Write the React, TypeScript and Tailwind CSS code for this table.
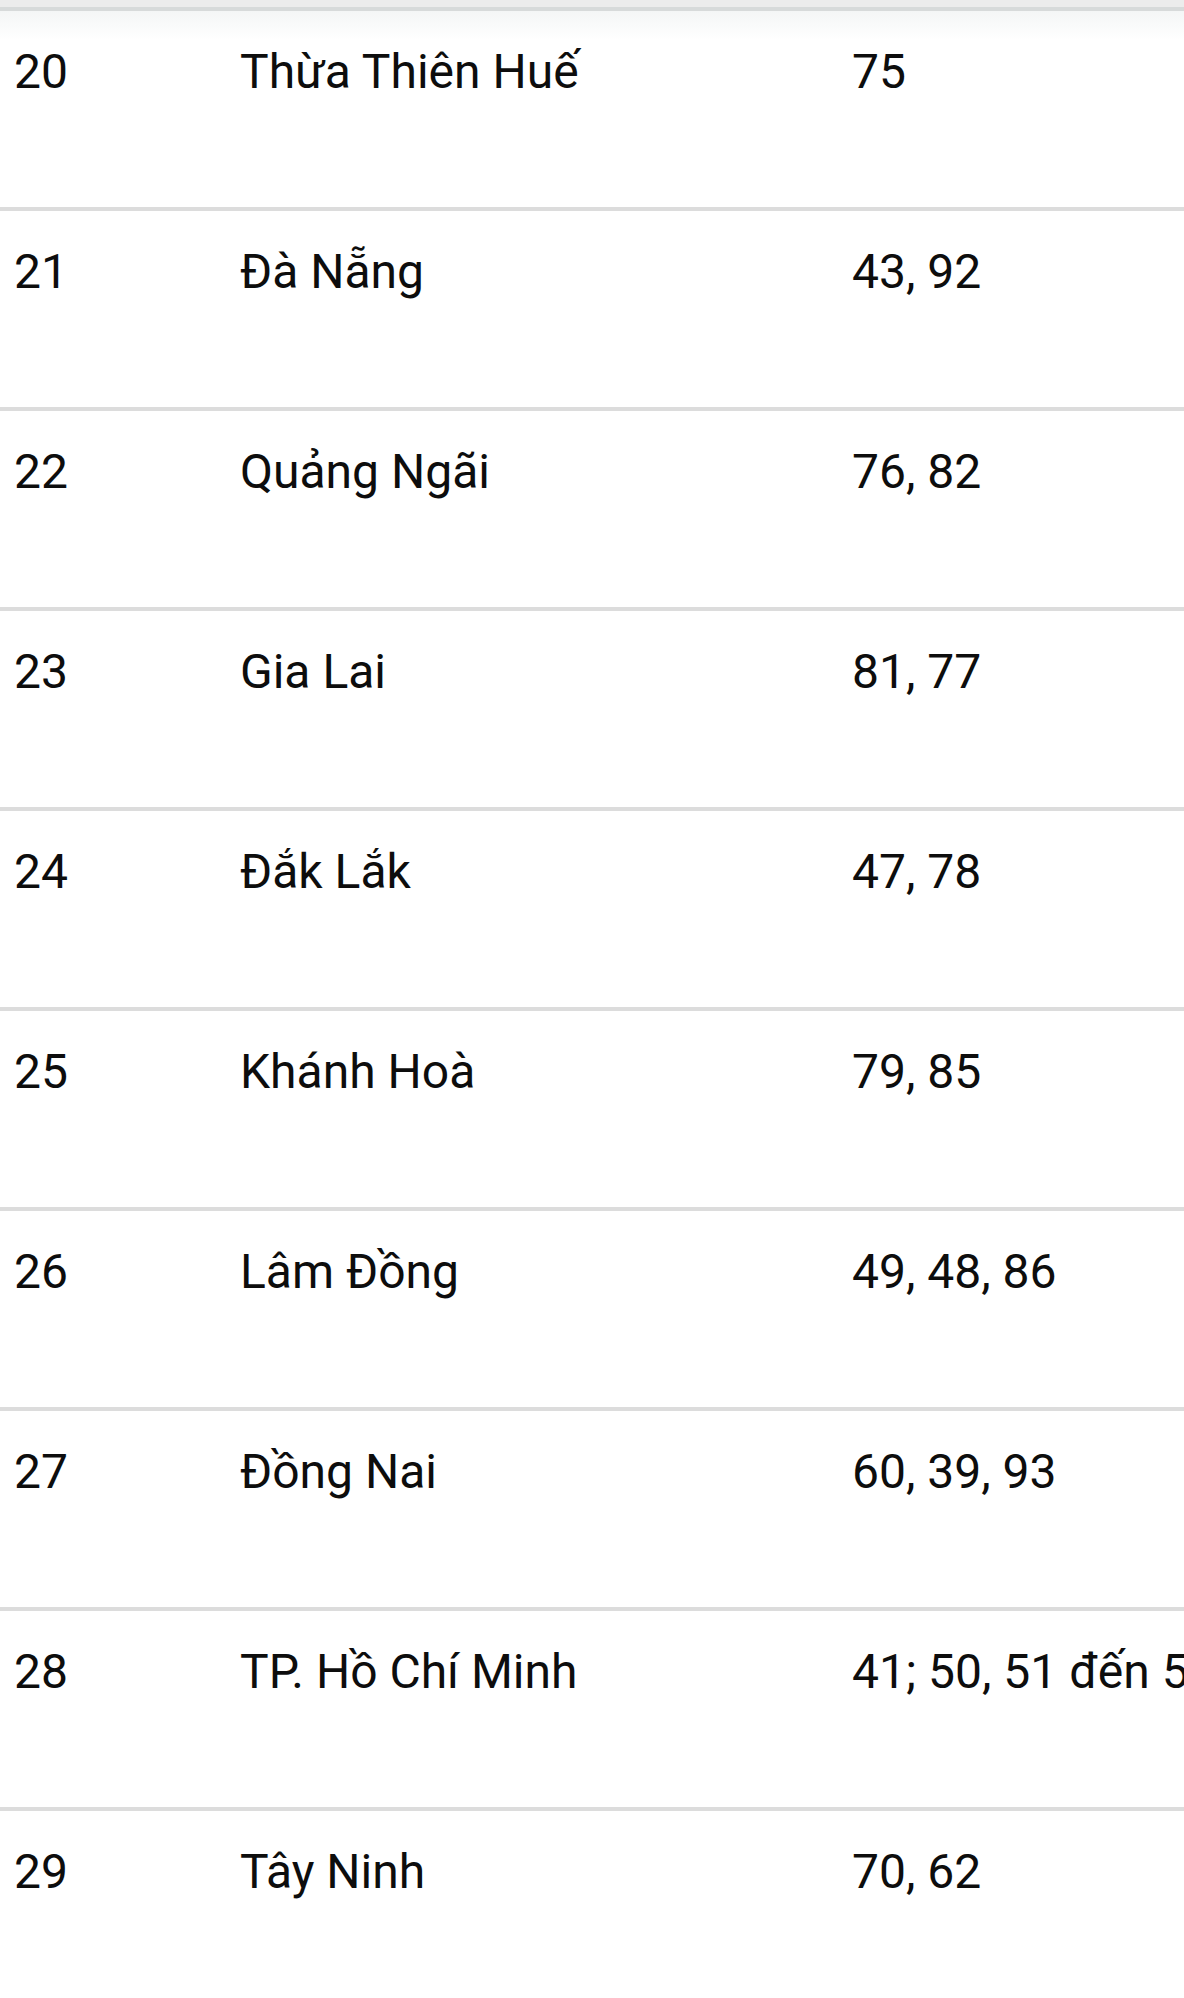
const rows = [
  { no: "20", name: "Thừa Thiên Huế", codes: "75" },
  { no: "21", name: "Đà Nẵng", codes: "43, 92" },
  { no: "22", name: "Quảng Ngãi", codes: "76, 82" },
  { no: "23", name: "Gia Lai", codes: "81, 77" },
  { no: "24", name: "Đắk Lắk", codes: "47, 78" },
  { no: "25", name: "Khánh Hoà", codes: "79, 85" },
  { no: "26", name: "Lâm Đồng", codes: "49, 48, 86" },
  { no: "27", name: "Đồng Nai", codes: "60, 39, 93" },
  { no: "28", name: "TP. Hồ Chí Minh", codes: "41; 50, 51 đến 59" },
  { no: "29", name: "Tây Ninh", codes: "70, 62" },
];

export default function App() {
  return (
    <div className="min-h-[1998px] w-[1184px] overflow-hidden bg-white font-['Roboto',sans-serif] text-[48px] leading-[56px] text-[#0d0d0d]">
      <div className="h-[7px] bg-[#ececec]" />
      {rows.map((row, i) => (
        <div
          key={row.no}
          className={
            i === 0
              ? "grid h-[200px] grid-cols-[240px_612px_1fr] border-t-4 border-[#d7dada] bg-gradient-to-b from-[#f4f6f6] to-white to-[15%] pt-[33px]"
              : "grid h-[200px] grid-cols-[240px_612px_1fr] border-t-4 border-[#dcdcdc] pt-[33px]"
          }
        >
          <div className="pl-[14px]">{row.no}</div>
          <div className="whitespace-nowrap">{row.name}</div>
          <div className="overflow-hidden whitespace-nowrap">{row.codes}</div>
        </div>
      ))}
      <div className="border-t-4 border-[#dcdcdc]" />
    </div>
  );
}
